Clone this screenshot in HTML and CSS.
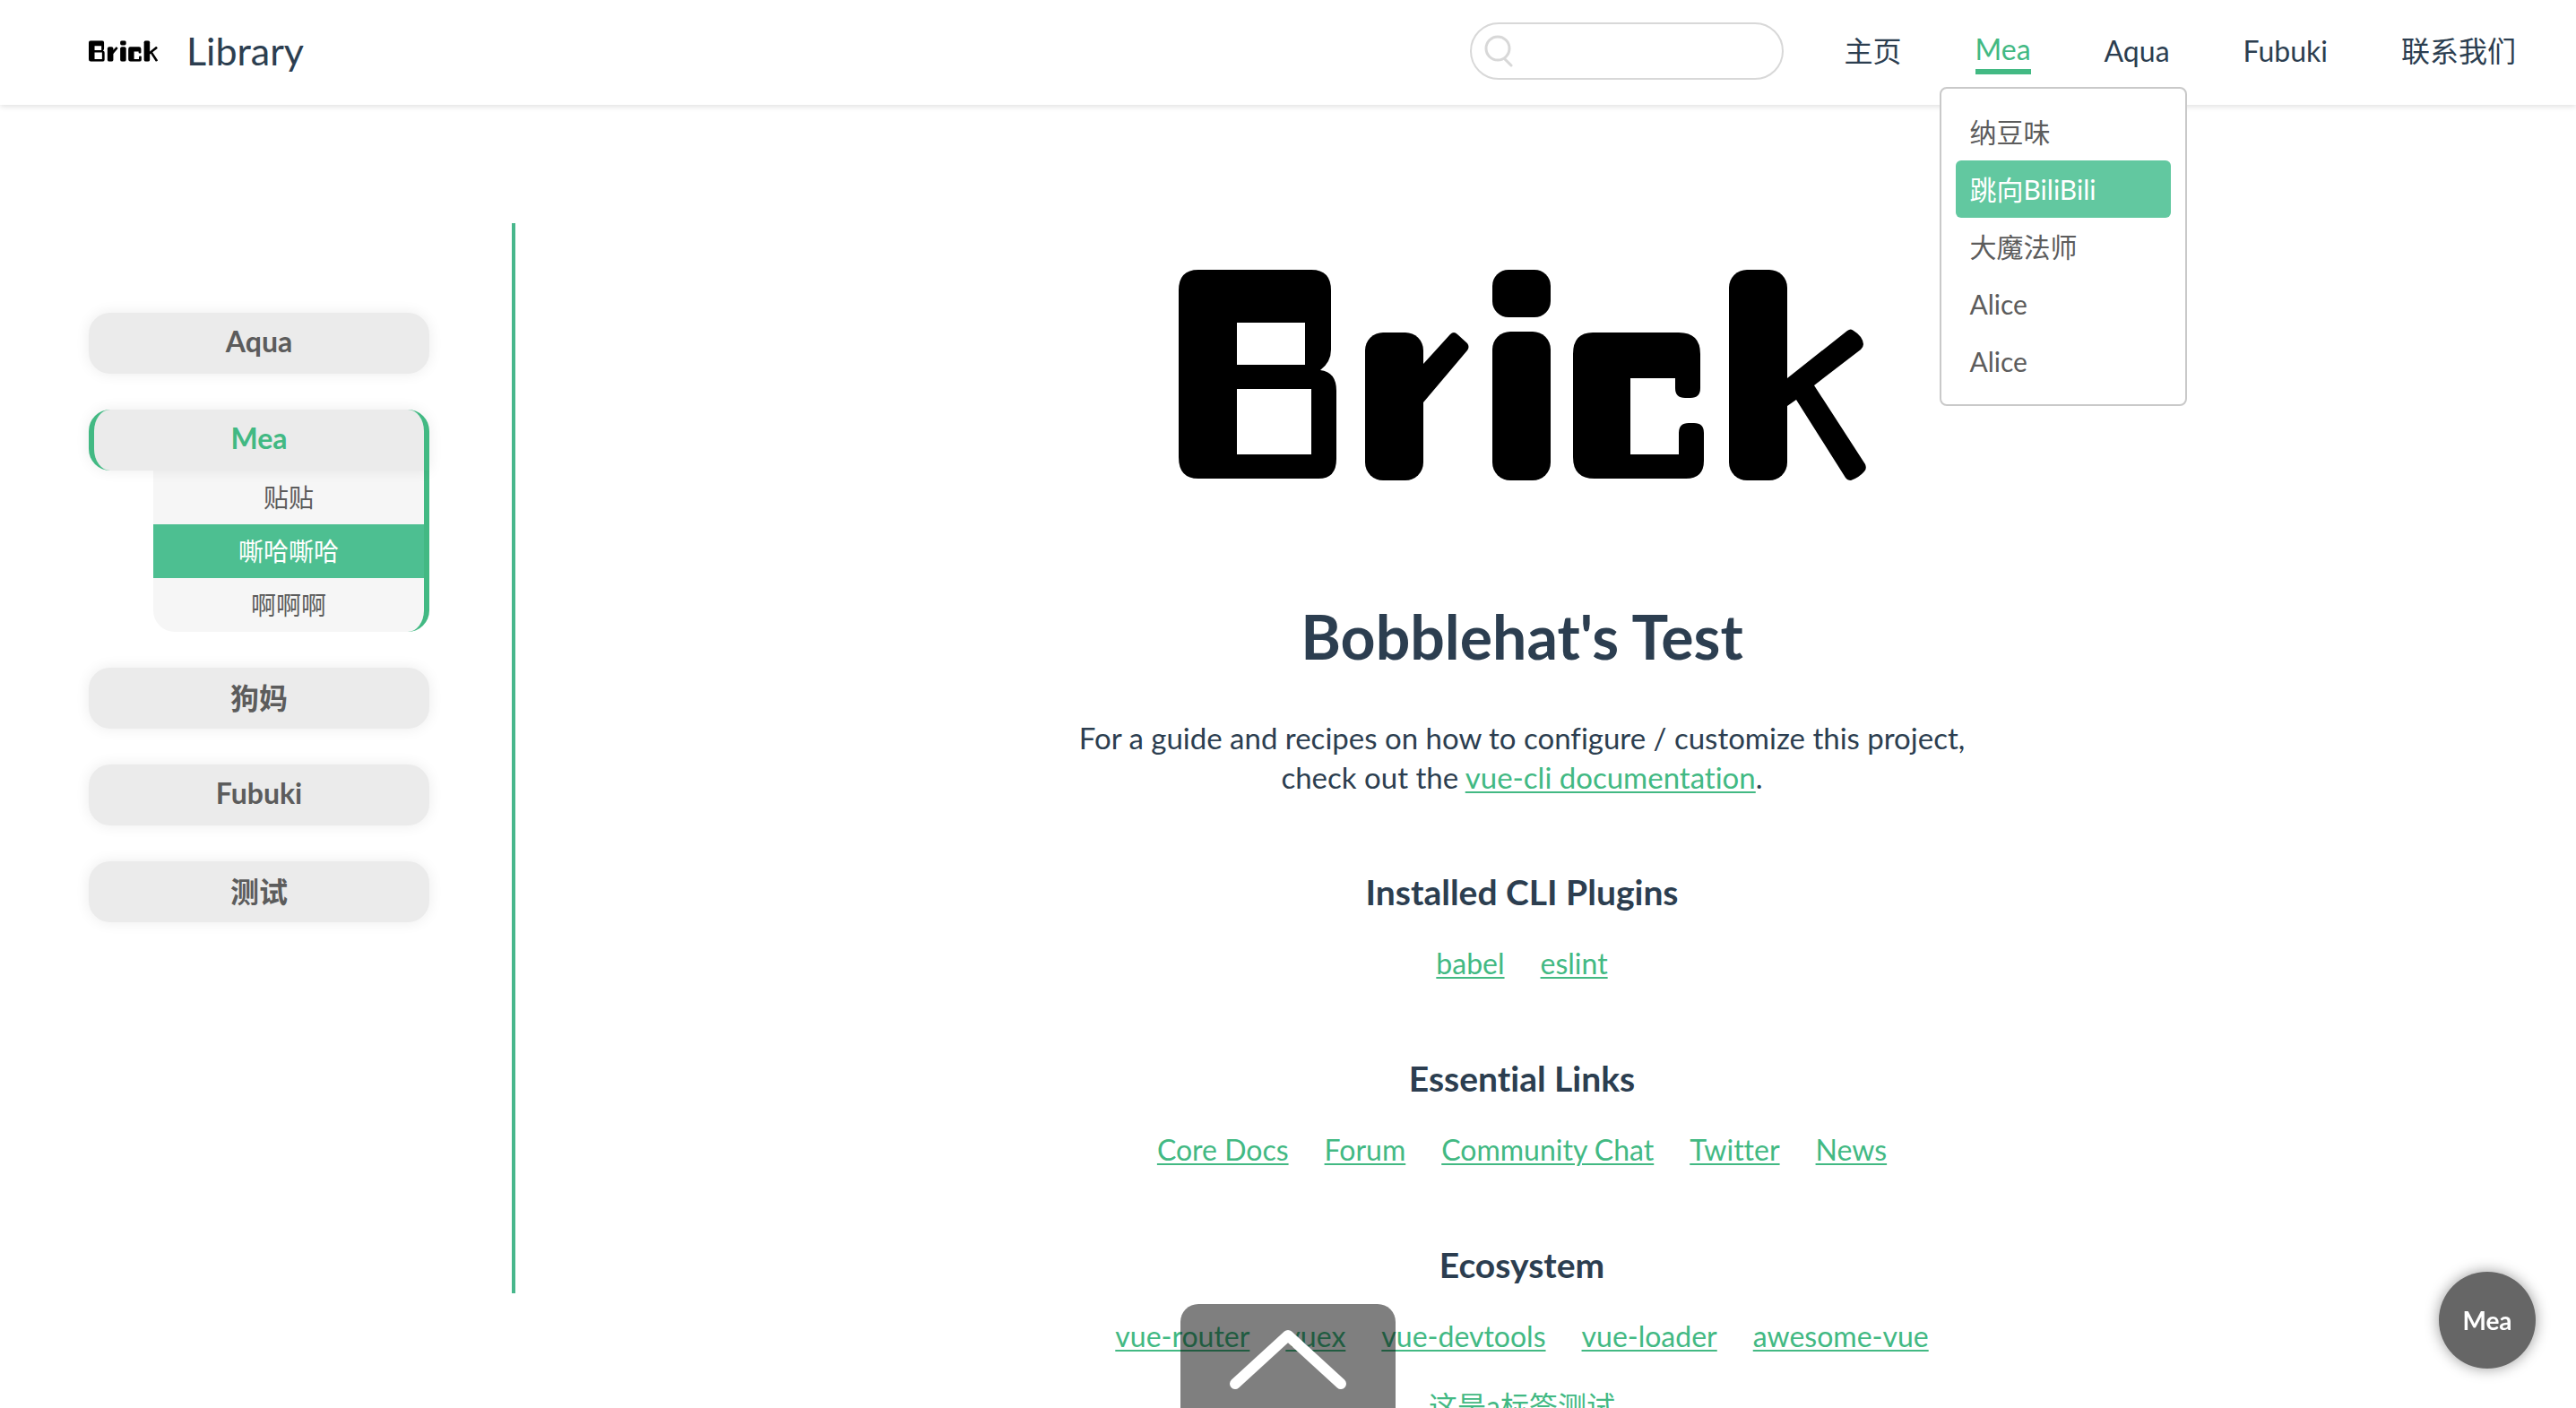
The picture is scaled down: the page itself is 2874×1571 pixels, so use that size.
FILE: index.html
```html
<!DOCTYPE html>
<html lang="zh-CN">
<head>
<meta charset="utf-8">
<meta name="viewport" content="width=device-width, initial-scale=1">
<title>Brick Library</title>
<link rel="stylesheet" href="styles.css">
</head>
<body>
<svg class="sprite" aria-hidden="true">
  <symbol id="brick" viewBox="0 0 767 236">
    <path fill-rule="evenodd" d="M22 1H148Q170 1 170 24V90Q170 104 158 113Q176 115 176 136V212Q176 234 156 234H22Q0 234 0 210V24Q0 1 22 1ZM65 60V107H141V60ZM65 134V207H148V134Z"/>
    <rect x="208" y="71" width="65" height="165" rx="20"/>
    <path d="M273 106L303 73Q307 69 311 73L322 83Q325 87 322 91L273 149L250 149V106Z"/>
    <rect x="350" y="1" width="65" height="53" rx="18"/>
    <rect x="350" y="70" width="65" height="166" rx="20"/>
    <path d="M462 71H558Q582 71 582 95V133Q582 144 571 144H565Q554 144 554 133V122H504V207H558V183Q558 172 569 172H575Q586 172 586 183V214Q586 234 566 234H464Q440 234 440 210V95Q440 71 462 71Z"/>
    <rect x="614" y="1" width="65" height="235" rx="20"/>
    <path d="M679 122L746 69Q750 66 753 69Q763 75 764 84Q764 87 761 90L709 130L766 218Q768 223 765 226Q759 233 750 236Q746 236 744 233L689 146L679 153L660 150V122Z"/>
  </symbol>
</svg>

<header class="topbar">
  <a class="brand" href="#">
    <svg class="brand-mark" viewBox="0 0 767 236" role="img" aria-label="Brick"><use href="#brick"/></svg>
    <span class="brand-name">Library</span>
  </a>
  <div class="search">
    <svg class="search-icon" viewBox="0 0 32 36" aria-hidden="true"><circle cx="15" cy="15" r="13"/><path d="M23 27L30 34"/></svg>
    <input class="search-input" type="search" aria-label="搜索">
  </div>
  <nav class="menu">
    <a class="menu-link" href="#">主页</a>
    <div class="menu-item">
      <a class="menu-link is-active" href="#">Mea</a>
      <div class="dropdown">
        <a class="dropdown-link" href="#">纳豆味</a>
        <a class="dropdown-link is-active" href="#">跳向BiliBili</a>
        <a class="dropdown-link" href="#">大魔法师</a>
        <a class="dropdown-link" href="#">Alice</a>
        <a class="dropdown-link" href="#">Alice</a>
      </div>
    </div>
    <a class="menu-link" href="#">Aqua</a>
    <a class="menu-link" href="#">Fubuki</a>
    <a class="menu-link" href="#">联系我们</a>
  </nav>
</header>

<div class="page">
  <aside class="sidebar">
    <button class="side-button" type="button">Aqua</button>
    <div class="side-group">
      <button class="side-button is-active" type="button" aria-expanded="true">Mea</button>
      <div class="side-sub">
        <a class="side-link" href="#">贴贴</a>
        <a class="side-link is-active" href="#">嘶哈嘶哈</a>
        <a class="side-link" href="#">啊啊啊</a>
      </div>
    </div>
    <button class="side-button" type="button">狗妈</button>
    <button class="side-button" type="button">Fubuki</button>
    <button class="side-button" type="button">测试</button>
  </aside>

  <main class="content">
    <svg class="hero" viewBox="0 0 767 236" role="img" aria-label="Brick"><use href="#brick"/></svg>
    <h1 class="title">Bobblehat's Test</h1>
    <p class="intro">For a guide and recipes on how to configure / customize this project,<br>check out the <a class="link" href="#">vue-cli documentation</a>.</p>

    <h3 class="section-title">Installed CLI Plugins</h3>
    <ul class="links">
      <li><a class="link" href="#">babel</a></li>
      <li><a class="link" href="#">eslint</a></li>
    </ul>

    <h3 class="section-title">Essential Links</h3>
    <ul class="links">
      <li><a class="link" href="#">Core Docs</a></li>
      <li><a class="link" href="#">Forum</a></li>
      <li><a class="link" href="#">Community Chat</a></li>
      <li><a class="link" href="#">Twitter</a></li>
      <li><a class="link" href="#">News</a></li>
    </ul>

    <h3 class="section-title">Ecosystem</h3>
    <ul class="links">
      <li><a class="link" href="#">vue-router</a></li>
      <li><a class="link" href="#">vuex</a></li>
      <li><a class="link" href="#">vue-devtools</a></li>
      <li><a class="link" href="#">vue-loader</a></li>
      <li><a class="link" href="#">awesome-vue</a></li>
    </ul>
    <p class="note"><a class="link" href="#">这是a标签测试</a></p>
  </main>
</div>

<button class="to-top" type="button" aria-label="返回顶部">
  <svg class="to-top-icon" viewBox="0 0 132 70" aria-hidden="true"><path d="M7 62L66 8L125 62"/></svg>
</button>
<button class="badge" type="button">Mea</button>
</body>
</html>
```
FILE: styles.css
```css
:root {
  --green: #42b983;
  --ink: #2c3e50;
  --grey: #5c5c5c;
}

* {
  box-sizing: border-box;
}

html {
  scrollbar-width: none;
}

body {
  margin: 0;
  background: #fff;
  color: var(--ink);
  font-family: Lato, "Noto Sans CJK SC", sans-serif;
  font-size: 32px;
  font-variant-ligatures: none;
  line-height: 44px;
}

a {
  color: inherit;
  text-decoration: none;
}

button {
  border: 0;
  font-family: inherit;
}

.sprite {
  display: none;
}

/* Top bar */
.topbar {
  position: relative;
  z-index: 2;
  display: flex;
  align-items: center;
  height: 117px;
  padding: 0 67px 4px 99px;
  background: #fff;
  box-shadow: 0 2px 6px rgba(0, 0, 0, 0.12);
}

.brand {
  display: flex;
  align-items: center;
  gap: 32px;
  margin-right: auto;
}

.brand-mark {
  width: 77px;
  height: 24px;
}

.brand-name {
  font-size: 43px;
}

.search {
  display: flex;
  align-items: center;
  width: 350px;
  height: 64px;
  margin-right: 68px;
  padding: 0 14px;
  border: 2px solid #d8d8d8;
  border-radius: 32px;
}

.search-icon {
  flex: none;
  width: 32px;
  height: 36px;
  fill: none;
  stroke: #d8d8d8;
  stroke-width: 3;
  stroke-linecap: round;
}

.search-input {
  flex: 1;
  min-width: 0;
  height: 44px;
  padding: 0 8px;
  border: 0;
  outline: 0;
  background: transparent;
  color: var(--ink);
  font: inherit;
}

.menu {
  display: flex;
  align-items: center;
  gap: 82px;
}

.menu-item {
  position: relative;
}

.menu-link {
  display: block;
}

.menu-link.is-active {
  padding-top: 2px;
  border-bottom: 6px solid var(--green);
  color: var(--green);
}

.dropdown {
  position: absolute;
  top: 66px;
  left: -40px;
  width: 276px;
  padding: 16px;
  border: 2px solid #c9c9c9;
  border-radius: 8px;
  background: #fff;
}

.dropdown-link {
  display: block;
  padding: 10px 16px;
  border-radius: 6px;
  color: var(--grey);
  font-size: 30px;
}

.dropdown-link.is-active {
  background: #62c8a0;
  color: #fff;
}

/* Page body */
.page {
  display: flex;
  align-items: flex-start;
  padding: 132px 53px 80px 99px;
}

.sidebar {
  display: flex;
  flex: none;
  flex-direction: column;
  gap: 40px;
  width: 476px;
  height: 76vh;
  padding: 100px 92px 0 0;
  border-right: 4px solid #48b78c;
}

.side-button {
  position: relative;
  display: block;
  width: 100%;
  height: 68px;
  padding: 0 0 5px;
  border-radius: 24px;
  background: #ebebeb;
  box-shadow: 0 0 16px rgba(0, 0, 0, 0.08);
  color: var(--grey);
  font-size: 32px;
  font-weight: 700;
}

.side-button.is-active {
  border-right: 6px solid var(--green);
  border-left: 6px solid var(--green);
  border-bottom-right-radius: 0;
  color: var(--green);
}

.side-sub {
  margin-left: 72px;
  overflow: hidden;
  border-right: 6px solid var(--green);
  border-radius: 0 0 24px 24px;
  background: #f6f6f6;
}

.side-link {
  display: block;
  color: var(--grey);
  font-size: 28px;
  line-height: 60px;
  text-align: center;
}

.side-link.is-active {
  background: #4dbf91;
  color: #fff;
}

.content {
  flex: 1;
  min-width: 0;
  padding-top: 51px;
  text-align: center;
}

.hero {
  display: block;
  width: 100%;
  max-width: 767px;
  margin: 0 auto;
}

.title {
  margin: 130px 0 47px;
  font-size: 68px;
  font-weight: 700;
  line-height: 88px;
}

.intro {
  margin: 0;
  font-size: 33px;
}

.link {
  color: var(--green);
  text-decoration: underline;
  text-decoration-thickness: 2px;
  text-underline-offset: 3px;
}

.section-title {
  margin: 80px 0 32px;
  font-size: 39px;
  font-weight: 700;
  line-height: 52px;
}

.links {
  display: flex;
  justify-content: center;
  gap: 40px;
  margin: 0;
  padding: 0;
  list-style: none;
}

.note {
  margin: 34px 0 0;
}

/* Floating controls */
.to-top {
  position: fixed;
  bottom: 0;
  left: 50%;
  width: 240px;
  height: 116px;
  margin-left: -120px;
  padding: 8px 0 0;
  border-radius: 20px 20px 0 0;
  background: rgba(0, 0, 0, 0.5);
}

.to-top-icon {
  display: block;
  width: 132px;
  height: 70px;
  margin: 0 auto;
  fill: none;
  stroke: #fff;
  stroke-width: 12;
  stroke-linecap: round;
  stroke-linejoin: round;
}

.badge {
  position: fixed;
  right: 45px;
  bottom: 44px;
  width: 108px;
  height: 108px;
  padding: 0;
  border-radius: 50%;
  background: #666;
  box-shadow: 0 0 16px rgba(0, 0, 0, 0.4);
  color: #fff;
  font-size: 28px;
  font-weight: 700;
}
```
